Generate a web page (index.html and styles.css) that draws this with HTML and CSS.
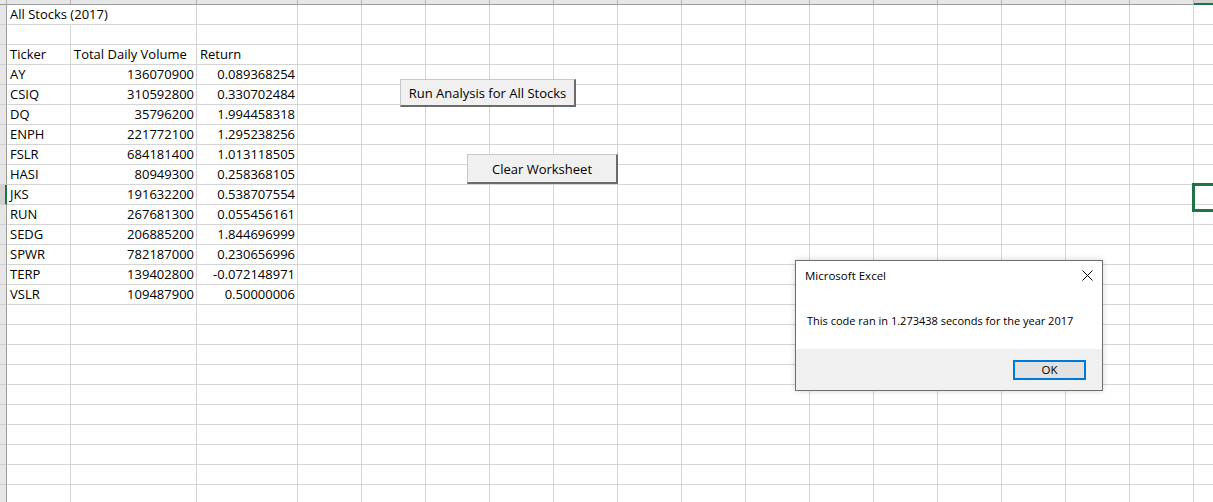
FILE: index.html
```html
<!DOCTYPE html>
<html>
<head>
<meta charset="utf-8">
<title>All Stocks (2017)</title>
<link rel="stylesheet" href="styles.css">
</head>
<body>
<div class="sheet">
  <div class="row head"><span class="rh"></span><span></span><span></span><span></span><span></span><span></span><span></span><span></span><span></span><span></span><span></span><span></span><span></span><span></span><span></span><span></span><span></span><span></span><span class="on"></span></div>
  <div class="row"><span class="rh"></span><span class="ovf">All Stocks (2017)</span><span></span><span></span><span></span><span></span><span></span><span></span><span></span><span></span><span></span><span></span><span></span><span></span><span></span><span></span><span></span><span></span><span></span></div>
  <div class="row"><span class="rh"></span><span></span><span></span><span></span><span></span><span></span><span></span><span></span><span></span><span></span><span></span><span></span><span></span><span></span><span></span><span></span><span></span><span></span><span></span></div>
  <div class="row"><span class="rh"></span><span>Ticker</span><span>Total Daily Volume</span><span>Return</span><span></span><span></span><span></span><span></span><span></span><span></span><span></span><span></span><span></span><span></span><span></span><span></span><span></span><span></span><span></span></div>
  <div class="row"><span class="rh"></span><span>AY</span><span class="n">136070900</span><span class="n">0.089368254</span><span></span><span></span><span></span><span></span><span></span><span></span><span></span><span></span><span></span><span></span><span></span><span></span><span></span><span></span><span></span></div>
  <div class="row"><span class="rh"></span><span>CSIQ</span><span class="n">310592800</span><span class="n">0.330702484</span><span></span><span></span><span></span><span></span><span></span><span></span><span></span><span></span><span></span><span></span><span></span><span></span><span></span><span></span><span></span></div>
  <div class="row"><span class="rh"></span><span>DQ</span><span class="n">35796200</span><span class="n">1.994458318</span><span></span><span></span><span></span><span></span><span></span><span></span><span></span><span></span><span></span><span></span><span></span><span></span><span></span><span></span><span></span></div>
  <div class="row"><span class="rh"></span><span>ENPH</span><span class="n">221772100</span><span class="n">1.295238256</span><span></span><span></span><span></span><span></span><span></span><span></span><span></span><span></span><span></span><span></span><span></span><span></span><span></span><span></span><span></span></div>
  <div class="row"><span class="rh"></span><span>FSLR</span><span class="n">684181400</span><span class="n">1.013118505</span><span></span><span></span><span></span><span></span><span></span><span></span><span></span><span></span><span></span><span></span><span></span><span></span><span></span><span></span><span></span></div>
  <div class="row"><span class="rh"></span><span>HASI</span><span class="n">80949300</span><span class="n">0.258368105</span><span></span><span></span><span></span><span></span><span></span><span></span><span></span><span></span><span></span><span></span><span></span><span></span><span></span><span></span><span></span></div>
  <div class="row"><span class="rh on"></span><span>JKS</span><span class="n">191632200</span><span class="n">0.538707554</span><span></span><span></span><span></span><span></span><span></span><span></span><span></span><span></span><span></span><span></span><span></span><span></span><span></span><span></span><span class="sel"></span></div>
  <div class="row"><span class="rh"></span><span>RUN</span><span class="n">267681300</span><span class="n">0.055456161</span><span></span><span></span><span></span><span></span><span></span><span></span><span></span><span></span><span></span><span></span><span></span><span></span><span></span><span></span><span></span></div>
  <div class="row"><span class="rh"></span><span>SEDG</span><span class="n">206885200</span><span class="n">1.844696999</span><span></span><span></span><span></span><span></span><span></span><span></span><span></span><span></span><span></span><span></span><span></span><span></span><span></span><span></span><span></span></div>
  <div class="row"><span class="rh"></span><span>SPWR</span><span class="n">782187000</span><span class="n">0.230656996</span><span></span><span></span><span></span><span></span><span></span><span></span><span></span><span></span><span></span><span></span><span></span><span></span><span></span><span></span><span></span></div>
  <div class="row"><span class="rh"></span><span>TERP</span><span class="n">139402800</span><span class="n">-0.072148971</span><span></span><span></span><span></span><span></span><span></span><span></span><span></span><span></span><span></span><span></span><span></span><span></span><span></span><span></span><span></span></div>
  <div class="row"><span class="rh"></span><span>VSLR</span><span class="n">109487900</span><span class="n">0.50000006</span><span></span><span></span><span></span><span></span><span></span><span></span><span></span><span></span><span></span><span></span><span></span><span></span><span></span><span></span><span></span></div>
  <div class="row"><span class="rh"></span><span></span><span></span><span></span><span></span><span></span><span></span><span></span><span></span><span></span><span></span><span></span><span></span><span></span><span></span><span></span><span></span><span></span><span></span></div>
  <div class="row"><span class="rh"></span><span></span><span></span><span></span><span></span><span></span><span></span><span></span><span></span><span></span><span></span><span></span><span></span><span></span><span></span><span></span><span></span><span></span><span></span></div>
  <div class="row"><span class="rh"></span><span></span><span></span><span></span><span></span><span></span><span></span><span></span><span></span><span></span><span></span><span></span><span></span><span></span><span></span><span></span><span></span><span></span><span></span></div>
  <div class="row"><span class="rh"></span><span></span><span></span><span></span><span></span><span></span><span></span><span></span><span></span><span></span><span></span><span></span><span></span><span></span><span></span><span></span><span></span><span></span><span></span></div>
  <div class="row"><span class="rh"></span><span></span><span></span><span></span><span></span><span></span><span></span><span></span><span></span><span></span><span></span><span></span><span></span><span></span><span></span><span></span><span></span><span></span><span></span></div>
  <div class="row"><span class="rh"></span><span></span><span></span><span></span><span></span><span></span><span></span><span></span><span></span><span></span><span></span><span></span><span></span><span></span><span></span><span></span><span></span><span></span><span></span></div>
  <div class="row"><span class="rh"></span><span></span><span></span><span></span><span></span><span></span><span></span><span></span><span></span><span></span><span></span><span></span><span></span><span></span><span></span><span></span><span></span><span></span><span></span></div>
  <div class="row"><span class="rh"></span><span></span><span></span><span></span><span></span><span></span><span></span><span></span><span></span><span></span><span></span><span></span><span></span><span></span><span></span><span></span><span></span><span></span><span></span></div>
  <div class="row"><span class="rh"></span><span></span><span></span><span></span><span></span><span></span><span></span><span></span><span></span><span></span><span></span><span></span><span></span><span></span><span></span><span></span><span></span><span></span><span></span></div>
  <div class="row"><span class="rh"></span><span></span><span></span><span></span><span></span><span></span><span></span><span></span><span></span><span></span><span></span><span></span><span></span><span></span><span></span><span></span><span></span><span></span><span></span></div>

  <button class="xlbtn btn-run">Run Analysis for All Stocks</button>
  <button class="xlbtn btn-clear">Clear Worksheet</button>

  <div class="msgbox">
    <div class="mb-title">
      <span>Microsoft Excel</span>
      <svg class="mb-x" width="11" height="11" viewBox="0 0 11 11"><path d="M0.5 0.5L10.5 10.5M10.5 0.5L0.5 10.5" stroke="#000" stroke-width="1" fill="none"/></svg>
    </div>
    <div class="mb-body">This code ran in 1.273438 seconds for the year 2017</div>
    <div class="mb-foot"><button class="mb-ok">OK</button></div>
  </div>
</div>
</body>
</html>
```
FILE: styles.css
```css
* {
  box-sizing: border-box;
  margin: 0;
  padding: 0;
}

html, body {
  background: #fff;
  overflow: hidden;
}

body {
  font-family: "Open Sans", "Liberation Sans", sans-serif;
  color: #000;
}

.sheet {
  position: relative;
  width: 1213px;
  height: 502px;
  overflow: hidden;
}

.row {
  display: grid;
  grid-template-columns: 7px 64px 126px 101px repeat(15, 64px);
  height: 20px;
}

.row > span {
  border-right: 1px solid #d4d4d4;
  border-bottom: 1px solid #d4d4d4;
  font-size: 13px;
  line-height: 19px;
  padding: 0 2px 0 3px;
  white-space: nowrap;
  overflow: hidden;
}

.row > .n {
  text-align: right;
  padding: 0 2px 0 2px;
}

.row > .ovf {
  overflow: visible;
  border-right-color: transparent;
  position: relative;
  z-index: 1;
}

/* column header strip */
.row.head {
  height: 5px;
}

.row.head > span {
  background: #e6e6e6;
  border-right-color: #b4b4b4;
  border-bottom-color: #9b9b9b;
}

.row.head > span.on {
  background: #d2d2d2;
  border-bottom: 2px solid #217346;
}

/* row header strip */
.row > .rh {
  background: #e6e6e6;
  border-right: 1px solid #9b9b9b;
  border-bottom-color: #d0d0d0;
  padding: 0;
}

.row > .rh.on {
  background: #d2d2d2;
  border-right: 2px solid #217346;
}

.row.head > .rh {
  border-bottom-color: #9b9b9b;
}

/* selected cell */
.row > .sel {
  position: relative;
  overflow: visible;
}

.row > .sel::after {
  content: "";
  position: absolute;
  top: -2px;
  left: -2px;
  width: 70px;
  height: 23px;
  border: 3px solid #217346;
}

/* form buttons on the sheet */
.xlbtn {
  position: absolute;
  background: #f0f0f0;
  border-style: solid;
  border-width: 1px 2px 2px 1px;
  border-color: #c8c8c8 #6b6b6b #6b6b6b #c8c8c8;
  font-family: "Open Sans", "Liberation Sans", sans-serif;
  font-size: 13px;
  color: #000;
  display: flex;
  align-items: center;
  justify-content: center;
}

.btn-run {
  left: 400px;
  top: 79px;
  width: 176px;
  height: 28px;
}

.btn-clear {
  left: 467px;
  top: 154px;
  width: 151px;
  height: 30px;
}

/* message box */
.msgbox {
  position: absolute;
  left: 795px;
  top: 260px;
  width: 308px;
  height: 131px;
  background: #fff;
  border: 1px solid #6f6f6f;
  box-shadow: 0 0 6px rgba(0, 0, 0, 0.18);
  display: flex;
  flex-direction: column;
  font-family: "Open Sans", "Liberation Sans", sans-serif;
  z-index: 5;
}

.mb-title {
  height: 28px;
  display: flex;
  align-items: center;
  justify-content: space-between;
  padding: 0 9px 0 9px;
  font-size: 11.5px;
}

.mb-x {
  display: block;
}

.mb-body {
  height: 60px;
  padding: 24px 0 0 11px;
  font-size: 11px;
  line-height: 16px;
  white-space: nowrap;
}

.mb-foot {
  flex: 1;
  background: #f0f0f0;
  display: flex;
  justify-content: flex-end;
  align-items: flex-start;
  padding: 11px 16px 0 0;
}

.mb-ok {
  width: 73px;
  height: 20px;
  background: #e1e1e1;
  border: 2px solid #0078d7;
  font-family: "Open Sans", "Liberation Sans", sans-serif;
  font-size: 11.5px;
  line-height: 14px;
  color: #000;
}
```
